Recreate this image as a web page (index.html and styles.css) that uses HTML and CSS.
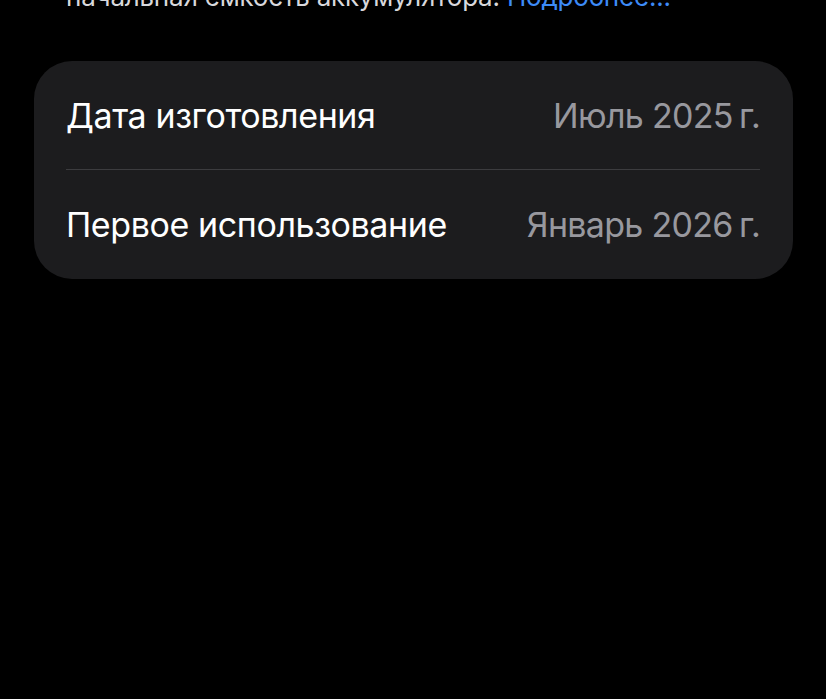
FILE: index.html
```html
<!DOCTYPE html>
<html lang="ru">
<head>
<meta charset="utf-8">
<link rel="stylesheet" href="styles.css">
</head>
<body>
<p class="note">начальная емкость аккумулятора. <span class="link">Подробнее...</span></p>
<div class="card">
  <div class="row">
    <span class="label">Дата изготовления</span>
    <span class="value">Июль 2025&#8239;г.</span>
  </div>
  <div class="row">
    <span class="label">Первое использование</span>
    <span class="value">Январь 2026&#8239;г.</span>
  </div>
</div>
</body>
</html>
```
FILE: styles.css
```css
html, body {
  margin: 0;
  padding: 0;
  background: #000;
  height: 100%;
}
body {
  font-family: Inter, "Noto Sans", sans-serif;
  color: #fff;
  overflow: hidden;
}
.note {
  margin: -18px 0 0;
  padding: 0 0 0 66px;
  font-size: 26px;
  line-height: 30px;
  color: #d8d8dc;
  letter-spacing: -0.2px;
  white-space: nowrap;
}
.link {
  color: #3d8bf7;
}
.card {
  margin: 49px 33px 0 34px;
  background: #1c1c1e;
  border-radius: 38px;
  padding: 0 33px 0 32px;
}
.row {
  height: 108px;
  display: flex;
  align-items: center;
  justify-content: space-between;
  font-size: 34px;
  letter-spacing: -0.4px;
}
.row + .row {
  border-top: 1.5px solid #3c3c3f;
  height: 109px;
}
.label {
  color: #fff;
}
.value {
  color: #98989e;
  letter-spacing: -0.7px;
}
```
